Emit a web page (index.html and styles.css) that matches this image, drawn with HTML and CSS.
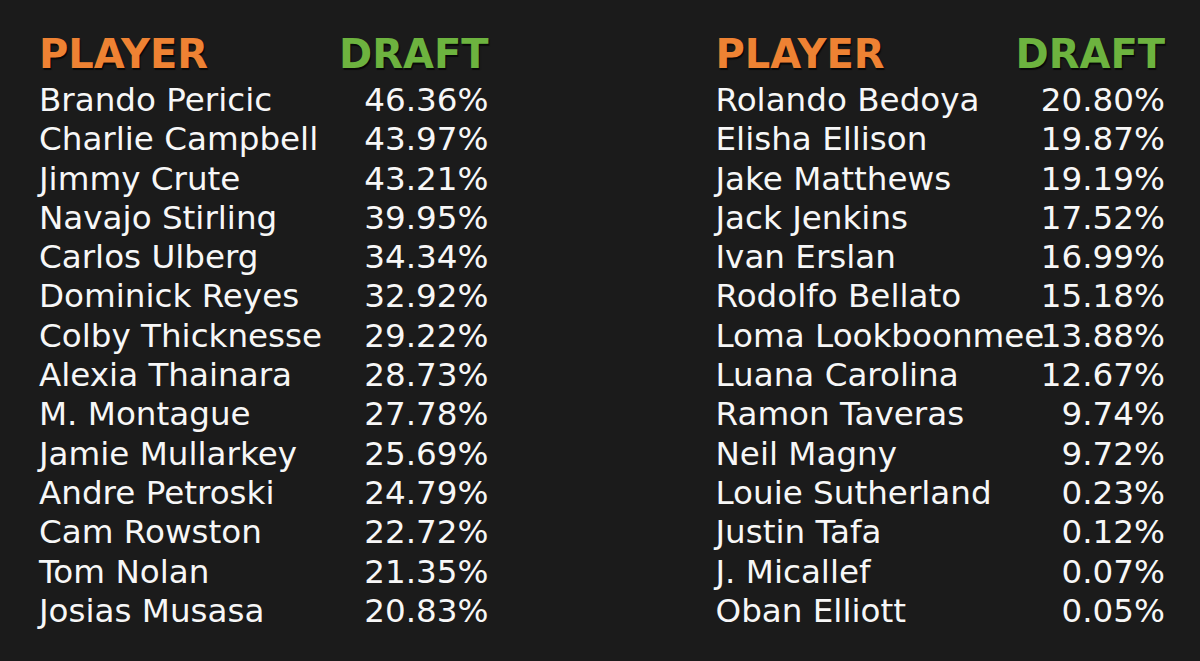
FILE: index.html
```html
<!DOCTYPE html>
<html>
<head>
<meta charset="utf-8">
<link rel="stylesheet" href="styles.css">
</head>
<body>
<main class="board">
  <section class="table">
    <div class="head"><span class="h-player">PLAYER</span><span class="h-draft">DRAFT</span></div>
    <div class="row"><span class="name">Brando Pericic</span><span class="pct">46.36%</span></div>
    <div class="row"><span class="name">Charlie Campbell</span><span class="pct">43.97%</span></div>
    <div class="row"><span class="name">Jimmy Crute</span><span class="pct">43.21%</span></div>
    <div class="row"><span class="name">Navajo Stirling</span><span class="pct">39.95%</span></div>
    <div class="row"><span class="name">Carlos Ulberg</span><span class="pct">34.34%</span></div>
    <div class="row"><span class="name">Dominick Reyes</span><span class="pct">32.92%</span></div>
    <div class="row"><span class="name">Colby Thicknesse</span><span class="pct">29.22%</span></div>
    <div class="row"><span class="name">Alexia Thainara</span><span class="pct">28.73%</span></div>
    <div class="row"><span class="name">M. Montague</span><span class="pct">27.78%</span></div>
    <div class="row"><span class="name">Jamie Mullarkey</span><span class="pct">25.69%</span></div>
    <div class="row"><span class="name">Andre Petroski</span><span class="pct">24.79%</span></div>
    <div class="row"><span class="name">Cam Rowston</span><span class="pct">22.72%</span></div>
    <div class="row"><span class="name">Tom Nolan</span><span class="pct">21.35%</span></div>
    <div class="row"><span class="name">Josias Musasa</span><span class="pct">20.83%</span></div>
  </section>
  <section class="table">
    <div class="head"><span class="h-player">PLAYER</span><span class="h-draft">DRAFT</span></div>
    <div class="row"><span class="name">Rolando Bedoya</span><span class="pct">20.80%</span></div>
    <div class="row"><span class="name">Elisha Ellison</span><span class="pct">19.87%</span></div>
    <div class="row"><span class="name">Jake Matthews</span><span class="pct">19.19%</span></div>
    <div class="row"><span class="name">Jack Jenkins</span><span class="pct">17.52%</span></div>
    <div class="row"><span class="name">Ivan Erslan</span><span class="pct">16.99%</span></div>
    <div class="row"><span class="name">Rodolfo Bellato</span><span class="pct">15.18%</span></div>
    <div class="row"><span class="name">Loma Lookboonmee</span><span class="pct">13.88%</span></div>
    <div class="row"><span class="name">Luana Carolina</span><span class="pct">12.67%</span></div>
    <div class="row"><span class="name">Ramon Taveras</span><span class="pct">9.74%</span></div>
    <div class="row"><span class="name">Neil Magny</span><span class="pct">9.72%</span></div>
    <div class="row"><span class="name">Louie Sutherland</span><span class="pct">0.23%</span></div>
    <div class="row"><span class="name">Justin Tafa</span><span class="pct">0.12%</span></div>
    <div class="row"><span class="name">J. Micallef</span><span class="pct">0.07%</span></div>
    <div class="row"><span class="name">Oban Elliott</span><span class="pct">0.05%</span></div>
  </section>
</main>
</body>
</html>
```
FILE: styles.css
```css
html, body {
  margin: 0;
  padding: 0;
  background: #1b1b1b;
}
body {
  width: 1200px;
  height: 661px;
  overflow: hidden;
  font-family: "DejaVu Sans", "Liberation Sans", sans-serif;
  color: #f7f7f7;
}
.board {
  display: flex;
  gap: 227px;
  padding: 30px 35px 0 39px;
}
.table {
  width: 450px;
  display: flex;
  flex-direction: column;
}
.head {
  display: flex;
  justify-content: space-between;
  font-weight: bold;
  font-size: 40px;
  line-height: 48px;
  margin-bottom: 3px;
  text-shadow: 1px 2px 1px rgba(0, 0, 0, 0.7);
}
.h-player { color: #ee8233; }
.h-draft { color: #6db33f; }
.row {
  display: grid;
  grid-template-columns: minmax(0, 1fr) auto;
  font-size: 32.6px;
  line-height: 39.3px;
}
.name {
  white-space: nowrap;
  overflow: visible;
}
.pct {
  text-align: right;
  white-space: nowrap;
}
```
